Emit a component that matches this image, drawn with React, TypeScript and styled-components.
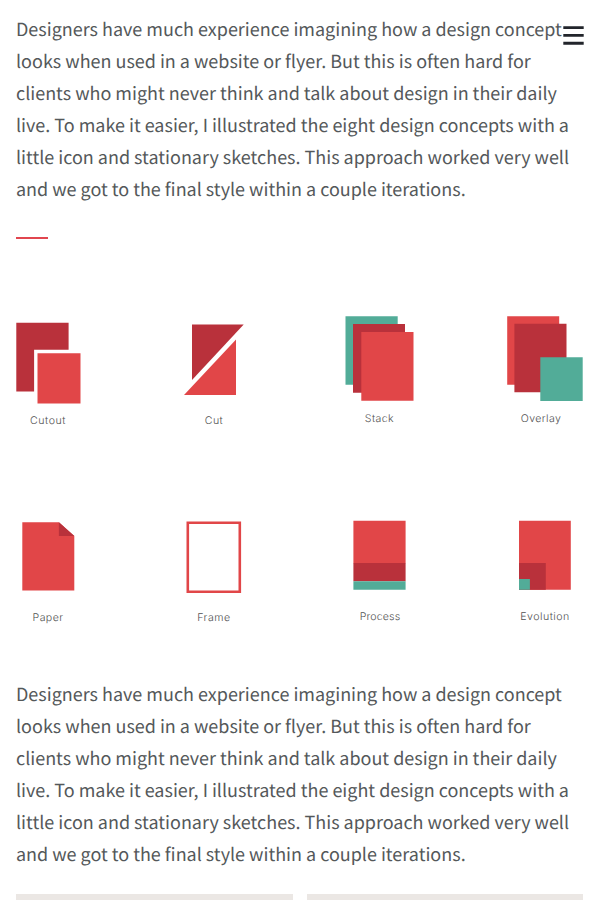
import React from "react";
import styled, { createGlobalStyle } from "styled-components";

const red = "#e14648";
const dark = "#b9313b";
const teal = "#52ac98";

const GlobalStyle = createGlobalStyle`
  body {
    margin: 0;
    background: #fff;
    overflow: hidden;
  }
`;

const Page = styled.main`
  box-sizing: border-box;
  height: 900px;
  overflow: hidden;
  padding: 13px 16px 0;
  color: #54585a;
  font-family: "Noto Sans CJK JP", "Noto Sans", sans-serif;
`;

const Paragraph = styled.p`
  margin: 0;
  font-size: 17.975px;
  font-weight: 400;
  line-height: 32px;
  white-space: nowrap;
  text-rendering: geometricPrecision;
`;

const Line = styled.span`
  display: block;
  height: 32px;
`;

const Divider = styled.hr`
  width: 32px;
  height: 2px;
  margin: 32px 0 0;
  border: 0;
  background: #e1464f;
`;

const IconRow = styled.section<{ $top: number; $height: number }>`
  display: grid;
  grid-template-columns: 166px 166px 165px 80px;
  height: ${(p) => p.$height}px;
  margin: ${(p) => p.$top}px -8px 0;
`;

const Concept = styled.figure`
  width: 80px;
  margin: 0;
`;

const Drawing = styled.svg`
  display: block;
  width: 80px;
  height: 92px;
`;

const Caption = styled.figcaption<{ $top: number; $shift?: number; $spacing?: number }>`
  margin: ${(p) => p.$top}px 0 0 ${(p) => p.$shift ?? 0}px;
  font-family: Inter, sans-serif;
  font-size: 10.6px;
  font-weight: 300;
  line-height: 14px;
  letter-spacing: ${(p) => p.$spacing ?? 0.4}px;
  text-align: center;
  text-rendering: geometricPrecision;
  white-space: nowrap;
  color: #505050;
`;

const Gallery = styled.section`
  display: grid;
  grid-template-columns: 1fr 1fr;
  gap: 14px;
  margin-top: 24px;
`;

const Tile = styled.div`
  height: 200px;
  background: #ebe7e4;
`;

const MenuButton = styled.button`
  position: fixed;
  top: 26px;
  right: 15px;
  width: 21px;
  height: 20px;
  padding: 0;
  border: 0;
  background: none;
`;

const MenuIcon = styled.svg`
  display: block;
`;

const lines = [
  "Designers have much experience imagining how a design concept",
  "looks when used in a website or flyer. But this is often hard for",
  "clients who might never think and talk about design in their daily",
  "live. To make it easier, I illustrated the eight design concepts with a",
  "little icon and stationary sketches. This approach worked very well",
  "and we got to the final style within a couple iterations.",
];

const Copy = () => (
  <Paragraph>
    {lines.map((text) => (
      <Line key={text}>{text}</Line>
    ))}
  </Paragraph>
);

const Art = ({ children }: { children: React.ReactNode }) => (
  <Drawing viewBox="0 0 80 92" aria-hidden="true">{children}</Drawing>
);

export default function App() {
  return (
    <>
      <GlobalStyle />
      <Page>
        <Copy />
        <Divider />
        <IconRow $top={75} $height={204}>
          <Concept>
            <Art>
              <path fill={dark} d="M8.3 8.7H60.6V35.8H26.1V77.4H8.3z" />
              <path fill={red} d="M29.5 39.2h43v50.3h-43z" />
            </Art>
            <Caption $top={8} $spacing={0.55}>Cutout</Caption>
          </Concept>
          <Concept>
            <Art>
              <path fill={dark} d="M18 10.5H69.7L18 66z" />
              <path fill={red} d="M62 25.5V81H10z" />
            </Art>
            <Caption $top={8}>Cut</Caption>
          </Concept>
          <Concept>
            <Art>
              <path fill={teal} d="M5.5 2.2h52.2v68.5H5.5z" />
              <path fill={dark} d="M13 10h52v68.7H13z" />
              <path fill={red} d="M21.3 18h52.2v68.8H21.3z" />
            </Art>
            <Caption $top={6} $shift={-1}>Stack</Caption>
          </Concept>
          <Concept>
            <Art>
              <path fill={red} d="M2.2 2.2h52v68.5h-52z" />
              <path fill={dark} d="M9.4 9.7h52.1v68.5H9.4z" />
              <path fill={teal} d="M35.3 43.3h42.4V87H35.3z" />
            </Art>
            <Caption $top={6} $shift={-8}>Overlay</Caption>
          </Concept>
        </IconRow>
        <IconRow $top={0} $height={160}>
          <Concept>
            <Art>
              <path fill={red} d="M14.3 4.3h36.6L66.3 18v54.6h-52z" />
              <path fill={dark} d="M50.9 4.3L66.3 18H50.9z" />
            </Art>
            <Caption $top={1}>Paper</Caption>
          </Concept>
          <Concept>
            <Art>
              <path fill="none" stroke={red} strokeWidth="2.6" d="M13.8 4.8h52v68.9h-52z" />
            </Art>
            <Caption $top={1} $spacing={0.55}>Frame</Caption>
          </Concept>
          <Concept>
            <Art>
              <path fill={red} d="M13.4 2.7h52.2v42.5H13.4z" />
              <path fill={dark} d="M13.4 45h52.2v18.3H13.4z" />
              <path fill={teal} d="M13.4 63.3h52.2v8.5H13.4z" />
            </Art>
            <Caption $top={0} $spacing={0.15}>Process</Caption>
          </Concept>
          <Concept>
            <Art>
              <path fill={red} d="M14 2.7h51.8v69.1H14z" />
              <path fill={dark} d="M14 45h26.8v26.8H14z" />
              <path fill={teal} d="M14 61h10.9v10.8H14z" />
            </Art>
            <Caption $top={0} $spacing={0.5}>Evolution</Caption>
          </Concept>
        </IconRow>
        <Copy />
        <Gallery>
          <Tile />
          <Tile />
        </Gallery>
        <MenuButton aria-label="Menu">
          <MenuIcon width="21" height="20" viewBox="0 0 21 20">
            <path fill="#22252b" d="M.3 .2h20.4V3H.3zM.3 7.9h20.4v2.8H.3zM.3 15.8h20.4v2.9H.3z" />
          </MenuIcon>
        </MenuButton>
      </Page>
    </>
  );
}
